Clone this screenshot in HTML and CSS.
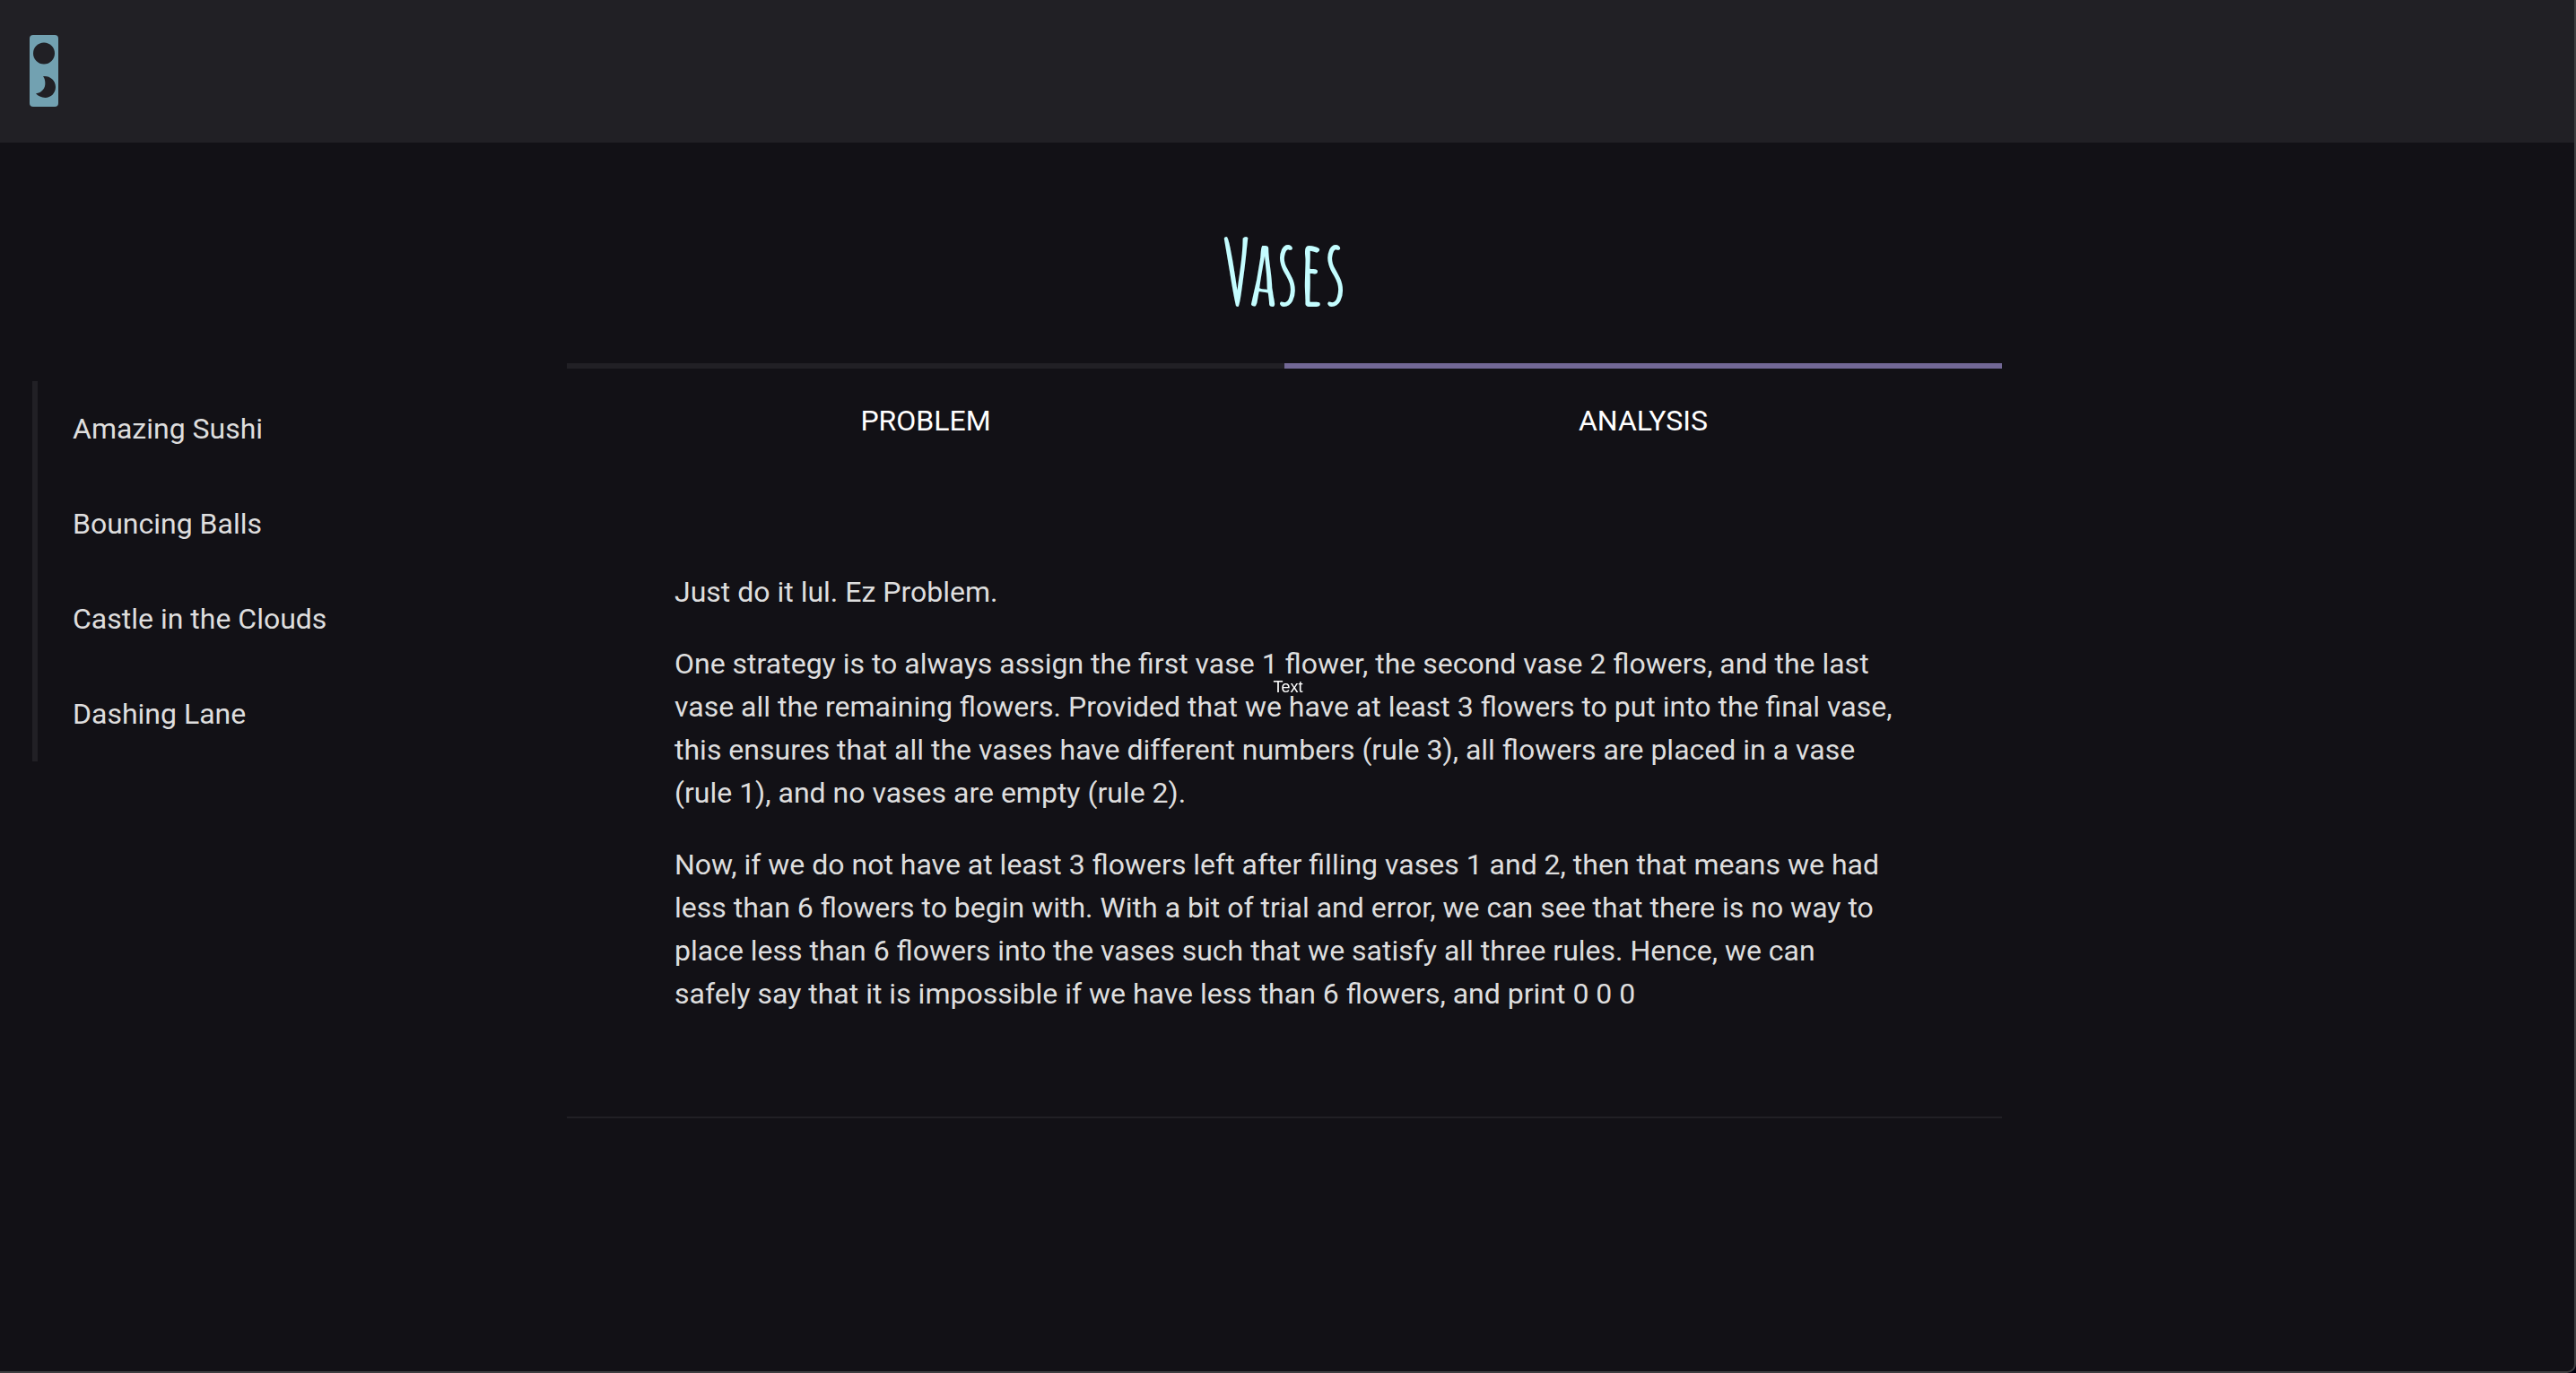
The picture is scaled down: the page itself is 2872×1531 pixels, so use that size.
FILE: index.html
```html
<!DOCTYPE html>
<html lang="en">
<head>
<meta charset="utf-8">
<meta name="viewport" content="width=device-width, initial-scale=1">
<title>Vases</title>
<link rel="stylesheet" href="styles.css">
</head>
<body class="page">
  <header class="topbar">
    <button class="theme-toggle" type="button" aria-label="Toggle theme">
      <svg class="theme-icon" viewBox="0 0 32 80" aria-hidden="true">
        <circle cx="16" cy="20.500" r="12"/>
        <path d="M15 46.200C21.500 45 29 50 29 58C29 65 23.500 70 17.500 70C13 70 9.500 68 7 65.300C14 64.500 18 59 17.300 52.500C17.100 49.800 16.500 48 15 46.200Z"/>
      </svg>
    </button>
  </header>
  <div class="layout">
    <nav class="sidebar" aria-label="Problems">
      <a class="sidebar-link" href="#sushi">Amazing Sushi</a>
      <a class="sidebar-link" href="#balls">Bouncing Balls</a>
      <a class="sidebar-link" href="#castle">Castle in the Clouds</a>
      <a class="sidebar-link" href="#lane">Dashing Lane</a>
    </nav>
    <main class="content">
      <h1 class="title">Vases</h1>
      <div class="tabs">
        <button class="tab" type="button">PROBLEM</button>
        <button class="tab tab-active" type="button">ANALYSIS</button>
      </div>
      <article class="article">
        <p>Just do it lul. Ez Problem.</p>
        <p>One strategy is to always assign the first vase 1 flower, the second vase 2 flowers, and the last vase all the remaining flowers. Provided that we have at least 3 flowers to put into the final vase, this ensures that all the vases have different numbers (rule 3), all flowers are placed in a vase (rule 1), and no vases are empty (rule 2).</p>
        <p>Now, if we do not have at least 3 flowers left after filling vases 1 and 2, then that means we had less than 6 flowers to begin with. With a bit of trial and error, we can see that there is no way to place less than 6 flowers into the vases such that we satisfy all three rules. Hence, we can safely say that it is impossible if we have less than 6 flowers, and print 0 0 0</p>
      </article>
    </main>
  </div>
  <span class="floating-label">Text</span>
</body>
</html>
```
FILE: styles.css
```css
* {
  box-sizing: border-box;
}

html {
  background: #00000f;
}

.page {
  display: flex;
  flex-direction: column;
  min-height: 100vh;
  margin: 0;
  border-right: 2px solid #3e3e40;
  border-bottom: 2px solid #3e3e40;
  border-bottom-right-radius: 10px;
  background: #121116;
  color: #dedede;
  font: 32px/48px Roboto, sans-serif;
}

.topbar {
  padding: 39px 33px 40px;
  background: #212025;
}

.theme-toggle {
  display: block;
  width: 32px;
  height: 80px;
  padding: 0;
  border: 0;
  border-radius: 4px;
  background: #72a1b1;
  cursor: pointer;
}

.theme-icon {
  display: block;
  width: 32px;
  height: 80px;
  fill: #212025;
}

.layout {
  display: grid;
  grid-template-columns: 1fr minmax(0, 1600px) 1fr;
  padding-right: 6px;
}

.sidebar {
  justify-self: start;
  align-self: start;
  margin: 266px 0 0 36px;
  border-left: 6px solid #212025;
}

.sidebar-link {
  display: block;
  padding: 29px 39px;
  color: inherit;
  text-decoration: none;
}

.content {
  border-bottom: 2px solid #212025;
}

.title {
  margin: 96px 0 54px;
  color: #c4fdff;
  font: 700 100px/96px "Amatic SC", "Liberation Sans", sans-serif;
  text-align: center;
}

.tabs {
  display: grid;
  grid-template-columns: 1fr 1fr;
}

.tab {
  height: 111px;
  padding: 14px 0 4px;
  border: 0;
  border-top: 6px solid #212025;
  background: none;
  color: #fff;
  font: inherit;
  cursor: pointer;
}

.tab-active {
  border-top-color: #726896;
}

.article {
  padding: 88px 120px 81px;
}

.article p {
  margin: 32px 0;
}

.floating-label {
  position: fixed;
  top: 50%;
  left: 50%;
  transform: translate(-50%, -50%);
  color: #fff;
  font: 18px/20px "Liberation Sans", sans-serif;
}
```
